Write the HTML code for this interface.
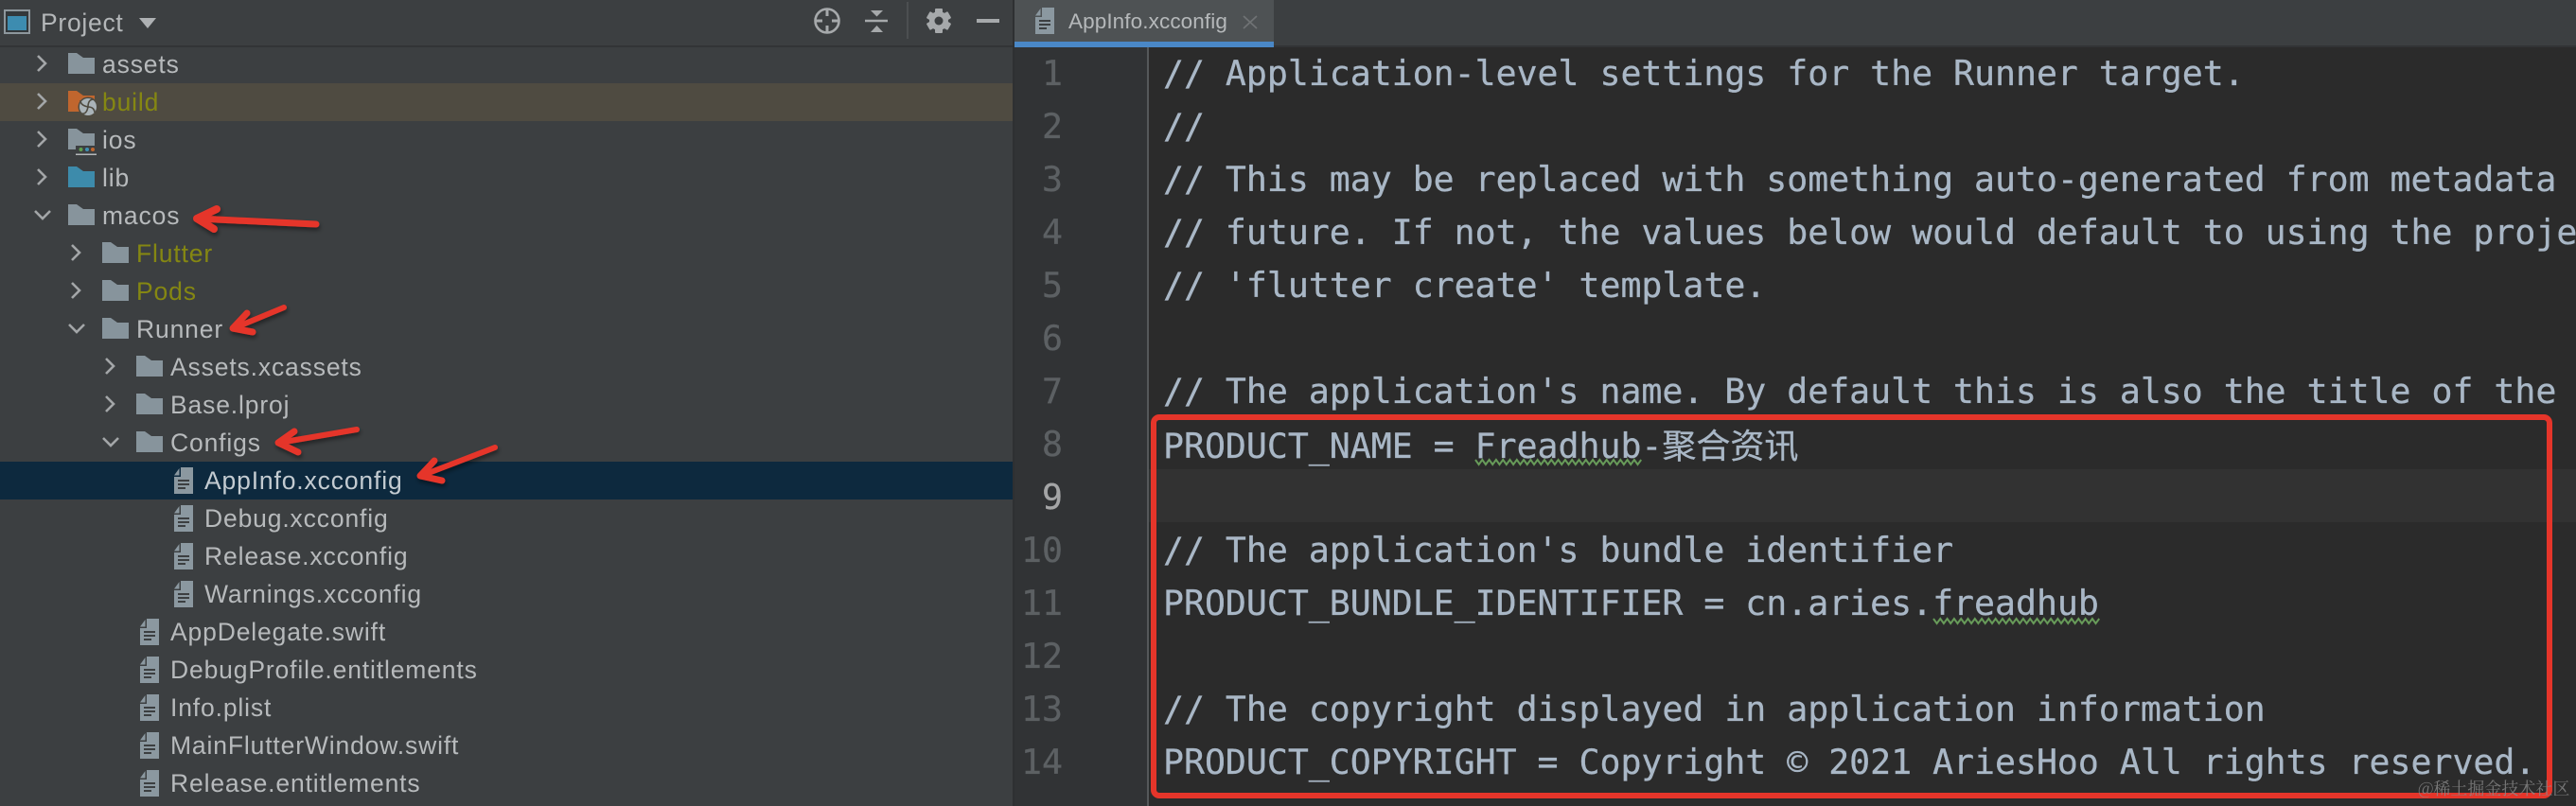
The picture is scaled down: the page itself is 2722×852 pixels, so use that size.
<!DOCTYPE html>
<html lang="en"><head><meta charset="utf-8"><title>AppInfo.xcconfig</title>
<style>
html,body{margin:0;padding:0;background:#2b2b2b}
#p{position:relative;width:2722px;height:852px;overflow:hidden;background:#2b2b2b}
.a{position:absolute}
.t{position:absolute;margin-left:-1px;font:26.5px/40px "Liberation Sans","Noto Sans CJK SC",sans-serif;color:#b7babc;white-space:nowrap;letter-spacing:.85px}
.y{color:#858712}
.c{position:absolute;left:1229px;width:1493px;height:56px;overflow:hidden;font:36.5px/56px "DejaVu Sans Mono","Liberation Mono","Noto Sans CJK SC",monospace;color:#a9b7c6;white-space:pre;-webkit-text-stroke:.3px #a9b7c6}
.c span{font-family:"Noto Sans CJK SC",sans-serif;font-size:36px}
.n{position:absolute;left:1060px;width:63px;text-align:right;height:56px;font:36.5px/56px "DejaVu Sans Mono","Liberation Mono",monospace;color:#5c6063;-webkit-text-stroke:.3px #5c6063}
svg{position:absolute;left:0;top:0}
</style></head><body><div id="p">
<!-- left panel -->
<div class="a" style="left:0;top:0;width:1070px;height:852px;background:#3c3f41"></div>
<div class="a" style="left:0;top:48px;width:1070px;height:2px;background:#323436"></div>
<div class="a" style="left:0;top:88px;width:1070px;height:40px;background:#4f4b41"></div>
<div class="a" style="left:0;top:488px;width:1070px;height:40px;background:#0d293e"></div>
<div class="a" style="left:1070px;top:0;width:2px;height:852px;background:#2e3032"></div>
<!-- tab bar -->
<div class="a" style="left:1072px;top:0;width:1650px;height:48px;background:#3c3f41"></div>
<div class="a" style="left:1072px;top:48px;width:1650px;height:2px;background:#323436"></div>
<div class="a" style="left:1072px;top:0;width:274px;height:44px;background:#4e5254"></div>
<div class="a" style="left:1072px;top:44px;width:274px;height:6px;background:#4a88c7"></div>
<!-- gutter -->
<div class="a" style="left:1072px;top:50px;width:140px;height:802px;background:#313335"></div>
<div class="a" style="left:1212px;top:50px;width:2px;height:802px;background:#55585a"></div>
<div class="a" style="left:1214px;top:496px;width:1508px;height:56px;background:#323232"></div>

<div class="t" style="left:44px;top:4px;letter-spacing:.72px;color:#b4b7b9">Project</div>
<div class="t" style="left:1130px;top:3px;font-size:22.5px;letter-spacing:.1px;color:#b5b8ba">AppInfo.xcconfig</div>

<div class="t" style="left:109px;top:48px">assets</div>
<div class="t y" style="left:109px;top:88px">build</div>
<div class="t" style="left:109px;top:128px">ios</div>
<div class="t" style="left:109px;top:168px">lib</div>
<div class="t" style="left:109px;top:208px">macos</div>
<div class="t y" style="left:145px;top:248px">Flutter</div>
<div class="t y" style="left:145px;top:288px">Pods</div>
<div class="t" style="left:145px;top:328px">Runner</div>
<div class="t" style="left:181px;top:368px">Assets.xcassets</div>
<div class="t" style="left:181px;top:408px">Base.lproj</div>
<div class="t" style="left:181px;top:448px">Configs</div>
<div class="t" style="left:217px;top:488px;color:#c3cbd1">AppInfo.xcconfig</div>
<div class="t" style="left:217px;top:528px">Debug.xcconfig</div>
<div class="t" style="left:217px;top:568px">Release.xcconfig</div>
<div class="t" style="left:217px;top:608px">Warnings.xcconfig</div>
<div class="t" style="left:181px;top:648px">AppDelegate.swift</div>
<div class="t" style="left:181px;top:688px">DebugProfile.entitlements</div>
<div class="t" style="left:181px;top:728px">Info.plist</div>
<div class="t" style="left:181px;top:768px">MainFlutterWindow.swift</div>
<div class="t" style="left:181px;top:808px">Release.entitlements</div>

<!-- line numbers -->
<div class="n" style="top:50px">1</div>
<div class="n" style="top:106px">2</div>
<div class="n" style="top:162px">3</div>
<div class="n" style="top:218px">4</div>
<div class="n" style="top:274px">5</div>
<div class="n" style="top:330px">6</div>
<div class="n" style="top:386px">7</div>
<div class="n" style="top:442px">8</div>
<div class="n" style="top:498px;color:#a4a5a6;-webkit-text-stroke:.3px #a4a5a6">9</div>
<div class="n" style="top:554px">10</div>
<div class="n" style="top:610px">11</div>
<div class="n" style="top:666px">12</div>
<div class="n" style="top:722px">13</div>
<div class="n" style="top:778px">14</div>

<!-- code -->
<div class="c" style="top:50px">// Application-level settings for the Runner target.</div>
<div class="c" style="top:106px">//</div>
<div class="c" style="top:162px">// This may be replaced with something auto-generated from metadata (e.g., Xcode) in the</div>
<div class="c" style="top:218px">// future. If not, the values below would default to using the project name when this becomes a</div>
<div class="c" style="top:274px">// 'flutter create' template.</div>
<div class="c" style="top:386px">// The application's name. By default this is also the title of the Flutter window.</div>
<div class="c" style="top:441px">PRODUCT_NAME = Freadhub-<span>聚合资讯</span></div>
<div class="c" style="top:554px">// The application's bundle identifier</div>
<div class="c" style="top:610px">PRODUCT_BUNDLE_IDENTIFIER = cn.aries.freadhub</div>
<div class="c" style="top:722px">// The copyright displayed in application information</div>
<div class="c" style="top:778px">PRODUCT_COPYRIGHT = Copyright © 2021 AriesHoo All rights reserved.</div>

<svg width="2722" height="852" viewBox="0 0 2722 852" xmlns="http://www.w3.org/2000/svg">
<defs>
<symbol id="f" overflow="visible"><path d="M0 0H9L16 5H28V22H0Z"/></symbol>
<symbol id="d" overflow="visible">
<path d="M7 0H20V28H0V10H7Z" fill="#8b98a0"/><path d="M5.500 1V8.500H0Z" fill="#8b98a0"/>
<path d="M4 14H16M4 18H16M4 22H12" stroke="#3c3f41" stroke-width="2" fill="none"/>
</symbol>
<symbol id="r" overflow="visible"><path d="M0 0L8 8L0 16" fill="none" stroke="#a3a6a8" stroke-width="2.600"/></symbol>
<symbol id="e" overflow="visible"><path d="M0 0L8 8L16 0" fill="none" stroke="#a3a6a8" stroke-width="2.600"/></symbol>
<filter id="sh" x="-20%" y="-40%" width="140%" height="180%"><feDropShadow dx="1" dy="3" stdDeviation="2.500" flood-color="#000" flood-opacity=".45"/></filter>
<path id="wave" d="M0 2l3.600 5 3.700-5 3.600 5 3.700-5 3.600 5 3.700-5 3.600 5 3.700-5 3.600 5 3.700-5 3.600 5 3.700-5 3.600 5 3.700-5 3.600 5 3.700-5 3.600 5 3.700-5 3.600 5 3.700-5 3.600 5 3.700-5 3.600 5 3.700-5 3.600 5 3.700-5 3.600 5 3.700-5 3.600 5 3.700-5 3.600 5 3.700-5 3.600 5 3.700-5 3.600 5 3.700-5 3.600 5 3.700-5 3.600 5 3.700-5 3.600 5 3.700-5 3.600 5 3.700-5 3.600 5 3.700-5 3.600 5 3.700-5" fill="none" stroke="#679a59" stroke-width="2"/>
</defs>

<!-- project icon -->
<rect x="5" y="11" width="26" height="24" fill="#33383b" stroke="#8e979d" stroke-width="2"/>
<rect x="8" y="17" width="20" height="15" fill="#3d8cb0"/>
<path d="M147 19H165L156 30Z" fill="#aeb1b3"/>

<!-- toolbar icons -->
<g fill="none" stroke="#a6a9ab">
<circle cx="874" cy="22" r="12.500" stroke-width="2.600"/>
<path d="M874 10V17M874 27V34M862 22H869M879 22H886" stroke-width="3"/>
<path d="M914 22H938" stroke-width="2.600"/>
</g>
<path d="M920 11H933L926.500 17.500ZM920 34H933L926.500 27Z" fill="#a6a9ab"/>
<rect x="958" y="2" width="2" height="39" fill="#4c4f51"/>
<g fill="#a6a9ab" transform="translate(992 22)">
<circle r="10"/>
<rect x="-4" y="-13" width="8" height="26" rx="1"/>
<rect x="-4" y="-13" width="8" height="26" rx="1" transform="rotate(60)"/>
<rect x="-4" y="-13" width="8" height="26" rx="1" transform="rotate(120)"/>
<circle r="4.500" fill="#3c3f41"/>
</g>
<rect x="1032" y="20" width="24" height="4" fill="#a6a9ab"/>

<!-- tab icon and close -->
<use href="#d" x="1094" y="8"/>
<path d="M1314 17L1328 30M1328 17L1314 30" stroke="#6f7274" stroke-width="1.800" fill="none"/>

<!-- chevrons -->
<use href="#r" x="40" y="59"/><use href="#r" x="40" y="99"/><use href="#r" x="40" y="139"/><use href="#r" x="40" y="179"/>
<use href="#e" x="37" y="223"/>
<use href="#r" x="76" y="259"/><use href="#r" x="76" y="299"/>
<use href="#e" x="73" y="343"/>
<use href="#r" x="112" y="379"/><use href="#r" x="112" y="419"/>
<use href="#e" x="109" y="463"/>

<!-- folders -->
<g fill="#87949c">
<use href="#f" x="72" y="56"/>
<use href="#f" x="72" y="136"/>
<use href="#f" x="72" y="216"/>
<use href="#f" x="108" y="256"/>
<use href="#f" x="108" y="296"/>
<use href="#f" x="108" y="336"/>
<use href="#f" x="144" y="376"/>
<use href="#f" x="144" y="416"/>
<use href="#f" x="144" y="456"/>
</g>
<use href="#f" x="72" y="96" fill="#c0662e"/>
<use href="#f" x="72" y="176" fill="#3d8bab"/>

<!-- build fan badge -->
<circle cx="93" cy="113" r="10.500" fill="#4f4b41"/>
<circle cx="93" cy="113" r="9" fill="#aab3b8"/>
<g fill="none" stroke="#4f4b41" stroke-width="1.600">
<path d="M93 113C93 108 95 105 99 105"/><path d="M93 113C98 113 100 116 100 119"/><path d="M93 113C92 118 90 121 86 120"/><path d="M93 113C88 112 85 110 85 106"/>
</g>
<!-- ios badge -->
<rect x="80" y="154" width="22" height="10" fill="#3c3f41"/>
<circle cx="85.500" cy="158" r="2" fill="#5fa04e"/><circle cx="92" cy="158" r="2" fill="#3f91b5"/><circle cx="98" cy="158" r="2" fill="#c0662e"/>
<rect x="80" y="162.500" width="22" height="1.500" fill="#b5b8ba"/>

<!-- file icons -->
<use href="#d" x="184" y="494"/><use href="#d" x="184" y="534"/><use href="#d" x="184" y="574"/><use href="#d" x="184" y="614"/>
<use href="#d" x="148" y="654"/><use href="#d" x="148" y="694"/><use href="#d" x="148" y="734"/><use href="#d" x="148" y="774"/><use href="#d" x="148" y="814"/>

<!-- squiggles -->
<use href="#wave" x="1559" y="484"/>
<use href="#wave" x="2043" y="652"/>

<!-- red box -->
<rect x="1219" y="441" width="1475" height="400" rx="6" fill="none" stroke="#e5352a" stroke-width="6"/>

<!-- arrows -->
<g fill="none" stroke="#e5352a" stroke-linecap="round" stroke-linejoin="round" filter="url(#sh)">
<path d="M334 237L208 231" stroke-width="7"/><path d="M229 221L208 231L226 242" stroke-width="8"/>
<path d="M300 325L247 347" stroke-width="6"/><path d="M261 331L246 347L267 351" stroke-width="7"/>
<path d="M377 454L295 468" stroke-width="6"/><path d="M311 456L294 468L315 478" stroke-width="7"/>
<path d="M523 473L445 503" stroke-width="6"/><path d="M459 487L444 503L467 508" stroke-width="7"/>
</g>
</svg>

<!-- watermark -->
<div class="a" style="left:2555px;top:821px;font:18px/24px 'Noto Serif CJK SC','Noto Sans CJK SC',serif;color:#8a8a8a;opacity:.8;white-space:nowrap">@稀土掘金技术社区</div>
</div></body></html>
